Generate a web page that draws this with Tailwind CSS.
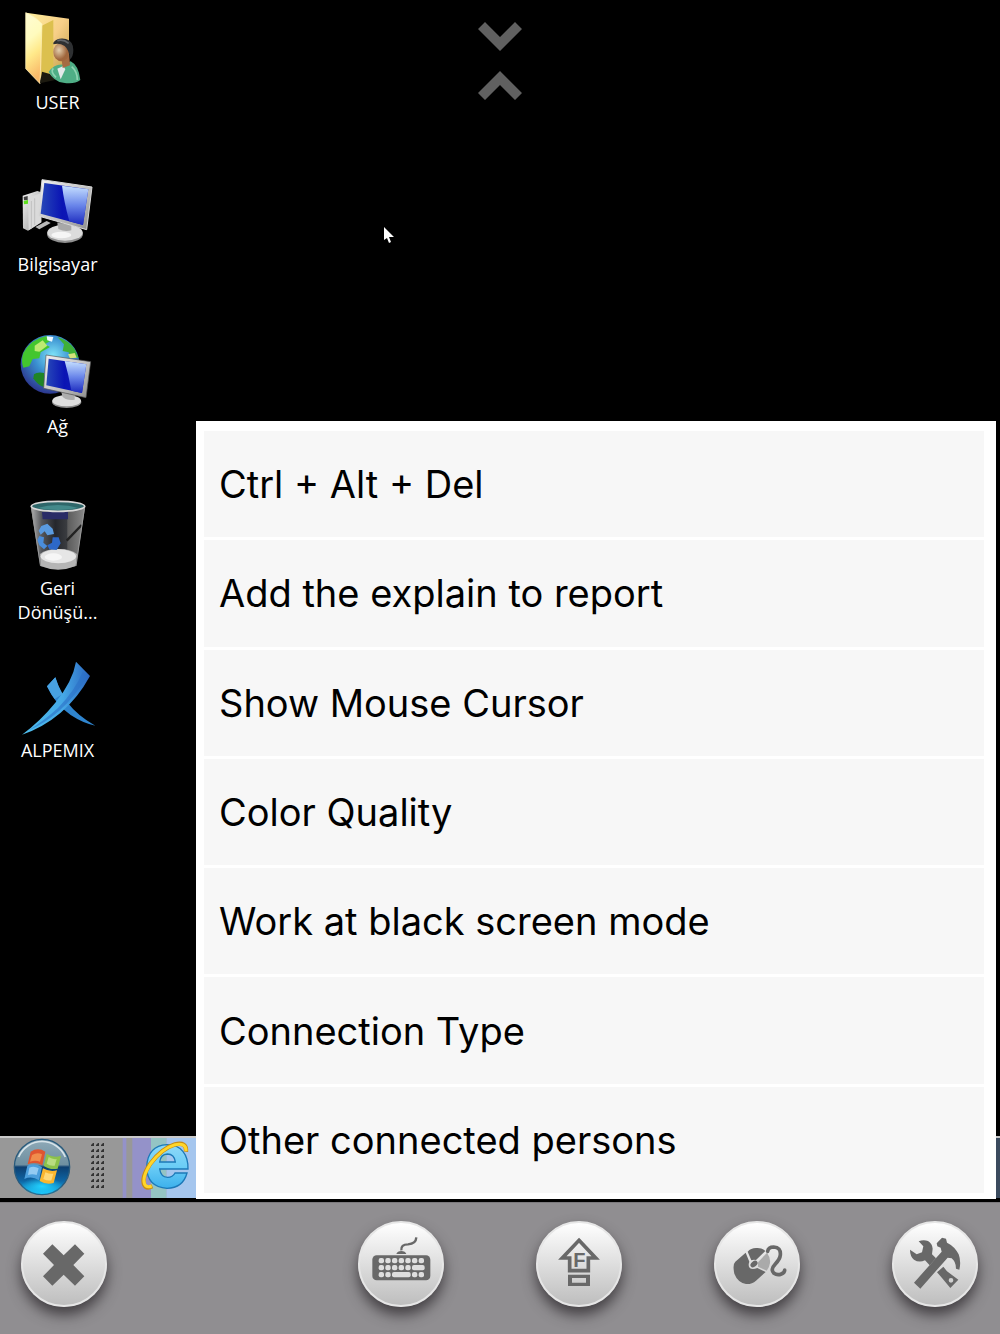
<!DOCTYPE html>
<html lang="en">
<head>
  <meta charset="UTF-8" />
  <meta name="viewport" content="width=device-width, initial-scale=1.0"/>
  <title>Remote Desktop</title>
  <script src="https://cdn.jsdelivr.net/npm/@tailwindcss/browser@4"></script>
</head>
<body class="bg-black min-h-screen flex flex-col font-['Inter','Liberation_Sans',sans-serif]">

  <!-- Remote desktop -->
  <main class="relative flex-1 flex flex-col pb-1">
    <div class="flex-1 pt-[10px]">
      <ul class="w-[115px] text-center text-[18px] leading-6 text-white font-['Open_Sans',sans-serif]">
        <li class="h-[162px]">
          <svg class="block w-full h-20" viewBox="0 30 345 240" aria-hidden="true">
            <defs>
              <linearGradient id="fold" x1="0" y1="0" x2="0.2" y2="1"><stop offset="0" stop-color="#fffcd4"/><stop offset=".4" stop-color="#fffbbe"/><stop offset=".65" stop-color="#ffe98a"/><stop offset="1" stop-color="#f9b868"/></linearGradient>
              <linearGradient id="foldBack" x1="0" y1="0" x2="1" y2="1"><stop offset="0" stop-color="#fff09c"/><stop offset=".5" stop-color="#f7cf88"/><stop offset="1" stop-color="#b8963c"/></linearGradient>
              <radialGradient id="face" cx=".35" cy=".4"><stop offset="0" stop-color="#e3cfae"/><stop offset="1" stop-color="#a0663c"/></radialGradient>
            </defs>
            <path d="M78 38 L207 56 L207 205 L122 240 Z" fill="url(#foldBack)"/>
            <path d="M124 78 L160 60 L160 215 L124 230 Z" fill="#dcc04e"/>
            <path d="M77 38 Q105 48 126 72 L120 251 L77 206 Z" fill="url(#fold)" stroke="#fff3bb" stroke-width="2"/>
            <path d="M120 250 L126 215 L150 222 L165 240 Z" fill="#1c1a10"/>
            <path d="M146 215 Q165 190 190 194 L212 184 Q236 196 241 240 Q222 254 190 248 Q160 244 146 215Z" fill="#4fae86"/>
            <path d="M160 205 Q150 215 168 232 M215 200 Q232 215 232 240" fill="none" stroke="#8ed3b2" stroke-width="5"/>
            <path d="M172 206 L182 238 L196 208 L190 198Z" fill="#e4e9ea"/>
            <path d="M184 170 L208 165 L210 196 L188 204Z" fill="#a56b43"/>
            <ellipse cx="184" cy="156" rx="24" ry="28" fill="url(#face)"/>
            <path d="M160 128 Q172 112 198 117 Q220 124 220 150 Q220 170 210 178 Q208 150 194 138 Q178 128 160 133Z" fill="#2e3032"/>
            <path d="M172 122 Q190 117 206 130" stroke="#62666b" stroke-width="5" fill="none"/>
          </svg>
          USER
        </li>
        <li class="h-[162px]">
          <svg class="block w-full h-20" viewBox="0 21 345 240" aria-hidden="true">
            <defs>
              <linearGradient id="metal" x1="0" y1="0" x2="1" y2="1"><stop offset="0" stop-color="#f3f3f3"/><stop offset=".6" stop-color="#bdbdbd"/><stop offset="1" stop-color="#8c8c8c"/></linearGradient>
              <linearGradient id="scr" x1="0" y1="0" x2="1" y2="0"><stop offset="0" stop-color="#2748b8"/><stop offset=".45" stop-color="#0a14b4"/><stop offset="1" stop-color="#1420b8"/></linearGradient>
              <linearGradient id="glare" x1="0" y1="0" x2="0" y2="1"><stop offset="0" stop-color="#c6e0ff"/><stop offset=".5" stop-color="#6a86ea"/><stop offset="1" stop-color="#1a28bd"/></linearGradient>
            </defs>
            <path d="M68 92 L112 78 L124 82 L124 172 L84 197 L69 190Z" fill="url(#metal)"/>
            <path d="M84 98 L124 84 V172 L86 196Z" fill="#dadada"/>
            <path d="M94 108 V190 M104 100 V180" stroke="#c0c0c0" stroke-width="3"/>
            <path d="M71 96 L83 93 V105 L72 106Z" fill="#404040"/>
            <path d="M71 108 L84 105 V116 L72 118Z" fill="#5de01d"/>
            <path d="M106 186 L140 168 L152 174 L118 193Z" fill="#b9b9b9"/>
            <path d="M172 172 L216 178 L216 204 L176 204Z" fill="#8b8b8b"/>
            <ellipse cx="195" cy="207" rx="54" ry="27" fill="#909090"/>
            <ellipse cx="195" cy="203" rx="53" ry="24" fill="#dcdcdc"/>
            <ellipse cx="184" cy="210" rx="30" ry="10" fill="#f5f5f5"/>
            <path d="M173 174 L214 180 V196 Q195 202 175 192Z" fill="#a8a8a8"/>
            <path d="M126 44 L276 66 L260 194 L115 153Z" fill="url(#metal)" stroke="#d9d9d9" stroke-width="3"/>
            <path d="M133 54 L265 73 L249 180 L122 146Z" fill="url(#scr)"/>
            <path d="M186 62 L265 73 L249 180 L208 169 Q192 110 186 62Z" fill="url(#glare)"/>
          </svg>
          Bilgisayar
        </li>
        <li class="h-[162px]">
          <svg class="block w-full h-20" viewBox="0 27 345 240" aria-hidden="true">
            <defs>
              <radialGradient id="globe" cx=".55" cy=".35" r=".7"><stop offset="0" stop-color="#7fe4f8"/><stop offset=".45" stop-color="#3a8fd0"/><stop offset="1" stop-color="#2a2c86"/></radialGradient>
            </defs>
            <circle cx="150" cy="118" r="88" fill="url(#globe)"/>
            <path d="M70 84 Q92 42 140 33 L150 48 L135 58 L150 66 L122 82 L118 100 L98 102 L88 124 L70 128 Q62 108 70 84Z" fill="#43c62e"/>
            <path d="M104 62 L128 46 L142 62 L118 80 L104 78Z" fill="#bdea72"/>
            <path d="M102 148 Q112 140 132 144 L132 186 Q112 180 100 160Z" fill="#1f8526"/>
            <path d="M172 36 Q208 46 226 76 L236 98 L212 98 L206 82 L188 78 L192 58Z" fill="#3fb037"/>
            <path d="M204 88 L224 84 L230 98 L210 100Z" fill="#d4e27a"/>
            <path d="M140 34 L160 36 L156 50 L142 46Z" fill="#eefaff"/>
            <path d="M185 200 L226 210 V228 L190 226Z" fill="#999"/>
            <ellipse cx="200" cy="231" rx="44" ry="18" fill="#8d8d8d"/>
            <ellipse cx="200" cy="227" rx="43" ry="17" fill="#dedede"/>
            <path d="M184 202 L224 212 V224 Q202 228 188 216Z" fill="#adadad"/>
            <path d="M138 90 L272 110 L258 218 L131 190Z" fill="url(#metal)" stroke="#555" stroke-width="2"/>
            <path d="M146 101 L259 118 L246 204 L139 181Z" fill="url(#scr)"/>
            <path d="M194 108 L259 118 L246 204 L214 197 Q206 150 194 108Z" fill="url(#glare)"/>
          </svg>
          Ağ
        </li>
        <li class="h-[162px]">
          <svg class="block w-full h-20" viewBox="0 18 345 240" aria-hidden="true">
            <defs>
              <linearGradient id="bin" x1="0" y1="0" x2="1" y2="0"><stop offset="0" stop-color="#b5b5b5"/><stop offset=".2" stop-color="#56585c"/><stop offset=".45" stop-color="#25272c"/><stop offset=".66" stop-color="#3a3c40"/><stop offset=".68" stop-color="#5c5c5c"/><stop offset="1" stop-color="#8a8a8a"/></linearGradient>
            </defs>
            <path d="M92 48 L256 48 L228 228 Q174 248 120 228Z" fill="url(#bin)"/>
            <path d="M126 66 H204 V88 H128Z" fill="#2a2c66"/>
            <path d="M245 105 L200 152" stroke="#222" stroke-width="7"/>
            <path d="M120 192 Q140 176 174 177 Q210 176 231 192 L227 228 Q174 250 122 228Z" fill="#b5b5b5"/>
            <ellipse cx="175" cy="199" rx="53" ry="21" fill="#e6e6e6"/>
            <ellipse cx="160" cy="201" rx="26" ry="11" fill="#f6f6f6"/>
            <path d="M124 108 L142 101 L158 116 L162 132 L142 136 L134 124 L122 134 L116 122Z" fill="#5a9be0"/>
            <path d="M118 138 L132 142 L130 158 L142 168 L132 178 L118 166 L112 150Z" fill="#4a8ddb"/>
            <path d="M158 142 L176 142 L182 160 L170 180 L148 178 L142 166 L156 158Z" fill="#2d68c8"/>
            <path d="M94 50 L122 228 M254 50 L228 228" stroke="#999" stroke-width="3"/>
            <ellipse cx="174" cy="49" rx="80" ry="15" fill="#2e6669" stroke="#d8d8d8" stroke-width="5"/>
            <path d="M112 54 Q174 36 236 54 Q174 66 112 54Z" fill="#43898a"/>
          </svg>
          Geri<br>Dönüşü...
        </li>
        <li>
          <svg class="block w-full h-20" viewBox="0 24 345 240" aria-hidden="true">
            <defs>
              <linearGradient id="alp" x1="0" y1="0" x2="1" y2="0"><stop offset="0" stop-color="#4fc0ee"/><stop offset=".6" stop-color="#45a8e6"/><stop offset="1" stop-color="#2b66c0"/></linearGradient>
            </defs>
            <path d="M166 82 L141 109 Q166 164 212 195 Q250 220 286 227 Q232 196 203 158 Q178 124 166 82Z" fill="#2f85cf"/>
            <path d="M166 82 L141 109 Q150 128 164 147 L188 132 Q174 108 166 82Z" fill="#48a2e2"/>
            <path d="M228 35 L270 78 Q234 144 182 188 Q130 232 66 254 Q122 212 166 158 Q218 94 228 35Z" fill="url(#alp)"/>
            <path d="M262 78 Q226 140 178 182 Q134 220 84 242 Q130 214 174 174 Q226 120 248 66Z" fill="#2c6fc6" opacity=".6"/>
          </svg>
          ALPEMIX
        </li>
      </ul>
    </div>

    <!-- Taskbar -->
    <div class="flex items-start h-[62px] border-t-2 border-[#c9c9c9] bg-linear-to-r from-[#989898] from-90% to-[#3b4b5e] to-98%">
      <button type="button" aria-label="Start" class="ml-[13px] size-[58px]">
        <svg class="block size-full" viewBox="39 39 174 174" aria-hidden="true">
          <defs>
            <linearGradient id="orb" x1="0" y1="0" x2="0" y2="1"><stop offset="0" stop-color="#8faab8"/><stop offset=".46" stop-color="#6e8fa0"/><stop offset=".5" stop-color="#0d3f70"/><stop offset=".75" stop-color="#0e65a4"/><stop offset="1" stop-color="#1ac8ff"/></linearGradient>
            <radialGradient id="orbGlow"><stop offset="0" stop-color="#22d2ff"/><stop offset="1" stop-color="#22d2ff" stop-opacity="0"/></radialGradient>
          </defs>
          <circle cx="126" cy="126" r="83" fill="url(#orb)" stroke="#285a7c" stroke-width="4"/>
          <path d="M56 96 A76 76 0 0 1 196 96" fill="none" stroke="#d7e4ea" stroke-width="5"/>
          <ellipse cx="126" cy="184" rx="62" ry="28" fill="url(#orbGlow)"/>
          <path d="M92 80 Q114 66 136 80 L127 121 Q106 108 83 118Z" fill="#df5530"/>
          <path d="M96 90 Q112 80 126 88 L120 110 Q106 104 90 110Z" fill="#f08c4c"/>
          <path d="M140 86 Q160 100 183 92 L173 131 Q150 136 131 122Z" fill="#8cc24a"/>
          <path d="M146 96 Q158 104 170 102 L164 122 Q150 124 140 116Z" fill="#b9dc80"/>
          <path d="M82 122 Q104 112 126 126 L117 166 Q96 152 73 162Z" fill="#4b9fdc"/>
          <path d="M88 128 Q102 122 116 130 L110 150 Q96 146 84 150Z" fill="#93cbf2"/>
          <path d="M129 130 Q150 142 171 136 L161 174 Q138 180 119 168Z" fill="#fbb62f"/>
          <path d="M136 142 Q150 148 160 146 L154 166 Q142 168 130 162Z" fill="#ffd877"/>
        </svg>
      </button>
      <svg class="ml-[19px] mt-1 w-[14px] h-12" viewBox="0 0 14 48" aria-hidden="true">
        <defs>
          <pattern id="grip" width="5" height="6" patternUnits="userSpaceOnUse"><path d="M3 1 L4 1 L4 4 L1 4 L1 3Z" fill="#333"/></pattern>
        </defs>
        <rect width="14" height="48" fill="url(#grip)"/>
      </svg>
      <a href="#" aria-label="Internet Explorer" class="ml-[17px] w-[79px] h-full">
        <svg class="block size-full" viewBox="360 39 237 180" preserveAspectRatio="none" aria-hidden="true">
          <defs>
            <linearGradient id="ie" x1="0" y1="0" x2="0" y2="1"><stop offset="0" stop-color="#8ed9f8"/><stop offset=".5" stop-color="#6bcdf6"/><stop offset="1" stop-color="#3cb0ec"/></linearGradient>
          </defs>
          <path d="M365 39h11v180h-11zM394 39h56v180h-56z" fill="#9492c9"/>
          <path d="M450 39h46v180h-46z" fill="#94c4c4"/>
          <path d="M496 39h101v180H496z" fill="#a5c6ee"/>
          <path fill-rule="evenodd" d="M498 59 C540 59 562 88 561 132 H476 Q479 156 500 157 Q515 157 522 144 H558 Q546 189 498 190 Q438 186 437 126 Q440 62 498 59Z M476 111 H523 Q520 87 499 87 Q479 88 476 111Z" fill="url(#ie)" stroke="#1c79b8" stroke-width="4"/>
          <path d="M555 80 Q558 50 522 58 Q482 70 448 116 Q420 158 430 180 Q436 192 454 184" fill="none" stroke="#c98d12" stroke-width="13"/>
          <path d="M555 78 Q556 52 522 59 Q482 71 448 117 Q422 158 431 178 Q437 189 452 183" fill="none" stroke="#ffd52a" stroke-width="9"/>
        </svg>
      </a>
    </div>

    <!-- Jump arrows -->
    <div class="absolute top-[22px] left-1/2 -translate-x-1/2 flex flex-col gap-5">
      <button type="button" aria-label="Scroll down">
        <svg class="block w-11 h-[29px]" viewBox="0 0 44 29" aria-hidden="true"><path d="M0 7 L7 0 L22 15 L37 0 L44 7 L22 29Z" fill="#606060"/></svg>
      </button>
      <button type="button" aria-label="Scroll up">
        <svg class="block w-11 h-[29px]" viewBox="0 0 44 29" aria-hidden="true"><path d="M0 22 L7 29 L22 14 L37 29 L44 22 L22 0Z" fill="#606060"/></svg>
      </button>
    </div>

    <!-- Mouse cursor -->
    <svg class="absolute top-[226px] left-[383px] w-3 h-[18px]" viewBox="0 0 12 18" aria-hidden="true">
      <path d="M1 1 V14 L4 12 L6 17 L8 16 L6 11 H11Z" fill="#fff"/>
    </svg>

    <!-- Tools menu -->
    <nav class="absolute right-1 bottom-[3px] w-4/5 min-h-[778px] flex flex-col gap-[3px] bg-white pt-[10px] pr-3 pb-[6px] pl-2 text-[38px] leading-[46px] text-black">
      <button type="button" class="flex-1 bg-[#f7f7f7] px-[15px] text-left">Ctrl + Alt + Del</button>
      <button type="button" class="flex-1 bg-[#f7f7f7] px-[15px] text-left">Add the explain to report</button>
      <button type="button" class="flex-1 bg-[#f7f7f7] px-[15px] text-left">Show Mouse Cursor</button>
      <button type="button" class="flex-1 bg-[#f7f7f7] px-[15px] text-left">Color Quality</button>
      <button type="button" class="flex-1 bg-[#f7f7f7] px-[15px] text-left">Work at black screen mode</button>
      <button type="button" class="flex-1 bg-[#f7f7f7] px-[15px] text-left">Connection Type</button>
      <button type="button" class="flex-1 bg-[#f7f7f7] px-[15px] text-left">Other connected persons</button>
    </nav>
  </main>

  <!-- Toolbar -->
  <footer class="flex items-start justify-between h-[132px] bg-[#908e91] border-t border-[#7c7a7d] pt-[18px] pl-[21px] pr-[22px] text-[#686868]">
    <button type="button" aria-label="Close" class="size-[86px] rounded-full border-2 border-[#e6e6e6] bg-linear-to-b from-white to-[#bebebe] shadow-[0_8px_14px_rgba(40,36,40,0.75)]">
      <svg class="block size-full" viewBox="69 84 246 246" fill="currentColor" aria-hidden="true">
        <path d="M157 148 L191 181 L225 148 L253 176 L220 210 L253 244 L225 272 L191 239 L157 272 L129 244 L162 210 L129 176Z"/>
      </svg>
    </button>
    <div class="flex gap-[92px]">
      <button type="button" aria-label="Keyboard" class="size-[86px] rounded-full border-2 border-[#e6e6e6] bg-linear-to-b from-white to-[#bebebe] shadow-[0_8px_14px_rgba(40,36,40,0.75)]">
        <svg class="block size-full" viewBox="60 84 246 246" fill="currentColor" aria-hidden="true">
          <path d="M184 166 Q182 148 204 148 Q228 146 229 127" fill="none" stroke="currentColor" stroke-width="7"/>
          <path d="M169 177 Q172 168 184 168 Q196 168 199 177Z"/>
          <rect x="97" y="181" width="174" height="75" rx="13"/>
          <g fill="#dedede">
            <rect x="116" y="189" width="16" height="16" rx="6"/><rect x="136" y="189" width="16" height="16" rx="6"/><rect x="156" y="189" width="16" height="16" rx="6"/><rect x="176" y="189" width="16" height="16" rx="6"/><rect x="196" y="189" width="16" height="16" rx="6"/><rect x="216" y="189" width="16" height="16" rx="6"/><rect x="236" y="189" width="16" height="16" rx="6"/>
            <rect x="116" y="210" width="16" height="16" rx="6"/><rect x="136" y="210" width="16" height="16" rx="6"/><rect x="156" y="210" width="16" height="16" rx="6"/><rect x="176" y="210" width="16" height="16" rx="6"/><rect x="196" y="210" width="16" height="16" rx="6"/><rect x="216" y="210" width="38" height="16" rx="6"/>
            <rect x="116" y="231" width="16" height="16" rx="6"/><rect x="136" y="231" width="16" height="16" rx="6"/><rect x="156" y="231" width="56" height="16" rx="6"/><rect x="216" y="231" width="16" height="16" rx="6"/><rect x="236" y="231" width="16" height="16" rx="6"/>
          </g>
        </svg>
      </button>
      <button type="button" aria-label="Function keys" class="size-[86px] rounded-full border-2 border-[#e6e6e6] bg-linear-to-b from-white to-[#bebebe] shadow-[0_8px_14px_rgba(40,36,40,0.75)]">
        <svg class="block size-full" viewBox="594 84 246 246" fill="currentColor" aria-hidden="true">
          <path d="M717 136 L767 189 H745 V227 H689 V189 H667Z" fill="none" stroke="currentColor" stroke-width="11"/>
          <path fill-rule="evenodd" d="M684 239H750V273H684ZM696 249V263H738V249Z"/>
          <text x="718" y="215" text-anchor="middle" font-size="60" font-weight="700" class="font-['Liberation_Sans',sans-serif]">F</text>
        </svg>
      </button>
      <button type="button" aria-label="Mouse" class="size-[86px] rounded-full border-2 border-[#e6e6e6] bg-linear-to-b from-white to-[#bebebe] shadow-[0_8px_14px_rgba(40,36,40,0.75)]">
        <svg class="block size-full" viewBox="48 84 246 246" fill="currentColor" aria-hidden="true">
          <path d="M137 173 L106 200 Q97 208 103 236 Q113 262 138 267 Q156 268 168 257 L197 231 L172 219 Q158 225 150 220 Q143 213 148 200Z"/>
          <path d="M143 170 Q154 157 173 159 Q188 159 196 168 L168 195 Q160 193 154 196Z"/>
          <path d="M174 202 L201 173 Q212 188 210 204 Q208 218 200 227 L174 215Z" fill="#aaa"/>
          <ellipse cx="162" cy="207" rx="12" ry="8" transform="rotate(-40 162 207)"/>
          <path d="M203 169 Q205 156 221 156 Q243 157 241 180 Q240 192 226 207 Q210 224 222 235 Q232 242 244 237 Q254 233 254 225" fill="none" stroke="currentColor" stroke-width="11" stroke-linecap="round"/>
        </svg>
      </button>
      <button type="button" aria-label="Tools" class="size-[86px] rounded-full border-2 border-[#e6e6e6] bg-linear-to-b from-white to-[#bebebe] shadow-[0_8px_14px_rgba(40,36,40,0.75)]">
        <svg class="block size-full" viewBox="582 84 246 246" fill="currentColor" aria-hidden="true">
          <path d="M656 139 Q670 133 684 138 Q697 146 698 161 L696 178 L708 190 L689 211 L675 196 Q657 204 642 194 Q630 184 630 164 L650 178 L666 172 L670 154Z"/>
          <path fill-rule="evenodd" d="M711 232 L730 215 L741 229 L775 254 L751 279 L726 249ZM746 256A7 7 0 1 0 760 256A7 7 0 1 0 746 256Z"/>
          <path d="M710 145 L726 128 L738 131 L741 143 Q764 154 776 178 Q784 200 778 224 L768 221 Q768 200 755 190 L743 188 L661 281 L642 263 L725 170 L722 158 L712 154Z"/>
        </svg>
      </button>
    </div>
  </footer>

</body>
</html>
